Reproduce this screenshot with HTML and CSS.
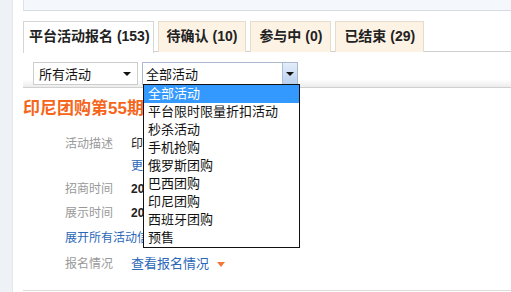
FILE: index.html
```html
<!DOCTYPE html>
<html lang="zh-CN">
<head>
  <meta charset="UTF-8">
  <title>平台活动报名</title>
  <link rel="stylesheet" href="styles.css">
</head>
<body>
  <div class="side"></div>
  <div class="main">
    <div class="topbar"></div>

    <div class="tabs">
      <a class="tab active">平台活动报名 (153)</a>
      <a class="tab">待确认 (10)</a>
      <a class="tab">参与中 (0)</a>
      <a class="tab">已结束 (29)</a>
    </div>

    <div class="filters">
      <div class="select plain">
        <span>所有活动</span>
        <i class="caret"></i>
      </div>
      <div class="select open">
        <span>全部活动</span>
        <b class="select-btn"><i class="caret"></i></b>
        <ul class="dropdown">
          <li class="selected">全部活动</li>
          <li>平台限时限量折扣活动</li>
          <li>秒杀活动</li>
          <li>手机抢购</li>
          <li>俄罗斯团购</li>
          <li>巴西团购</li>
          <li>印尼团购</li>
          <li>西班牙团购</li>
          <li>预售</li>
        </ul>
      </div>
    </div>

    <div class="activity">
      <h2 class="activity-title">印尼团购第55期</h2>
      <div class="row desc">
        <span class="label">活动描述</span>
        <div class="value">
          <div>印尼团购</div>
          <a class="link">更多</a>
        </div>
      </div>
      <div class="row">
        <span class="label">招商时间</span>
        <span class="value strong">2017</span>
      </div>
      <div class="row">
        <span class="label">展示时间</span>
        <span class="value strong">2017</span>
      </div>
      <div class="row">
        <a class="link">展开所有活动信息</a>
      </div>
      <div class="row">
        <span class="label">报名情况</span>
        <a class="link">查看报名情况 <i class="down"></i></a>
      </div>
    </div>
  </div>
</body>
</html>
```

FILE: styles.css
```css
* {
  box-sizing: border-box;
}

body {
  margin: 0;
  display: flex;
  min-height: 292px;
  font-family: "Liberation Sans", "Noto Sans CJK SC", sans-serif;
  font-size: 12px;
  color: #333;
  background: #fff;
  overflow: hidden;
}

.side {
  width: 13px;
  flex: none;
  background: #eef1f6;
  border-right: 1px solid #e2e6ee;
}

.main {
  flex: 1;
  padding-left: 10px;
}

.topbar {
  height: 11px;
  background: #f4f7fb;
  border-left: 1px solid #dde2ea;
  border-bottom: 1px solid #d6dbe3;
}

/* tabs */
.tabs {
  display: flex;
  gap: 4px;
  margin-top: 10px;
  height: 31px;
  border-bottom: 1px solid #cfcfcf;
}

.tab {
  height: 31px;
  padding: 0 8px;
  line-height: 29px;
  font-size: 14px;
  font-weight: bold;
  color: #222;
  background: #fdf3e5;
  border: 1px solid #e6dccb;
  border-bottom: none;
}

.tab.active {
  padding: 0 3px 0 5px;
  background: #fff;
  border-color: #d6d6d6;
  margin-bottom: -1px;
  height: 32px;
}

/* filters */
.filters {
  display: flex;
  gap: 4px;
  height: 36px;
  padding: 10px 0 0 10px;
  background: linear-gradient(to bottom, #fff 0, #fff 78%, #ececec 100%);
  border-bottom: 1px solid #d0d0d0;
}

.select {
  position: relative;
  display: flex;
  align-items: center;
  height: 23px;
  padding-left: 5px;
  font-size: 13px;
  color: #111;
  background: #fff;
  border: 1px solid #cdcdcd;
}

.select.plain {
  width: 105px;
}

.select.plain .caret {
  margin-left: auto;
  margin-right: 6px;
}

.select.open {
  width: 156px;
  padding-left: 3px;
  border-color: #a9b8cc;
}

.caret {
  display: block;
  width: 0;
  height: 0;
  border-left: 4px solid transparent;
  border-right: 4px solid transparent;
  border-top: 4px solid #111;
}

.select-btn {
  margin-left: auto;
  width: 15px;
  height: 21px;
  display: flex;
  align-items: center;
  justify-content: center;
  background: linear-gradient(to bottom, #e4eefb, #b9d0ee);
  border-left: 1px solid #a9bedc;
}

.dropdown {
  position: absolute;
  top: 21px;
  left: 0;
  width: 157px;
  margin: 0;
  padding: 0;
  list-style: none;
  background: #fff;
  border: 1px solid #111;
  z-index: 5;
}

.dropdown li {
  height: 18px;
  line-height: 18px;
  padding-left: 4px;
  font-size: 13px;
  color: #111;
  white-space: nowrap;
}

.dropdown li.selected {
  background: #3399ff;
  color: #fff;
}

/* activity */
.activity {
  padding-top: 10px;
  border-bottom: 1px solid #dcdcdc;
  padding-bottom: 14px;
}

.activity-title {
  margin: 0 0 13px;
  height: 22px;
  line-height: 22px;
  font-size: 17px;
  font-weight: bold;
  color: #f5651a;
  white-space: nowrap;
}

.row {
  display: flex;
  padding-left: 42px;
  line-height: 24px;
  white-space: nowrap;
}

.row.desc {
  line-height: 22px;
}

.label {
  width: 66px;
  flex: none;
  color: #999;
}

.value {
  color: #222;
}

.value.strong {
  font-weight: bold;
}

.link {
  color: #2a67b8;
  cursor: pointer;
}

.row:nth-child(5) {
  margin-top: 1px;
}

.row:last-child {
  margin-top: 2px;
}

.row:last-child .link {
  font-size: 13px;
}

.down {
  display: inline-block;
  width: 0;
  height: 0;
  margin-left: 4px;
  vertical-align: middle;
  border-left: 4px solid transparent;
  border-right: 4px solid transparent;
  border-top: 5px solid #f0793a;
}
```
